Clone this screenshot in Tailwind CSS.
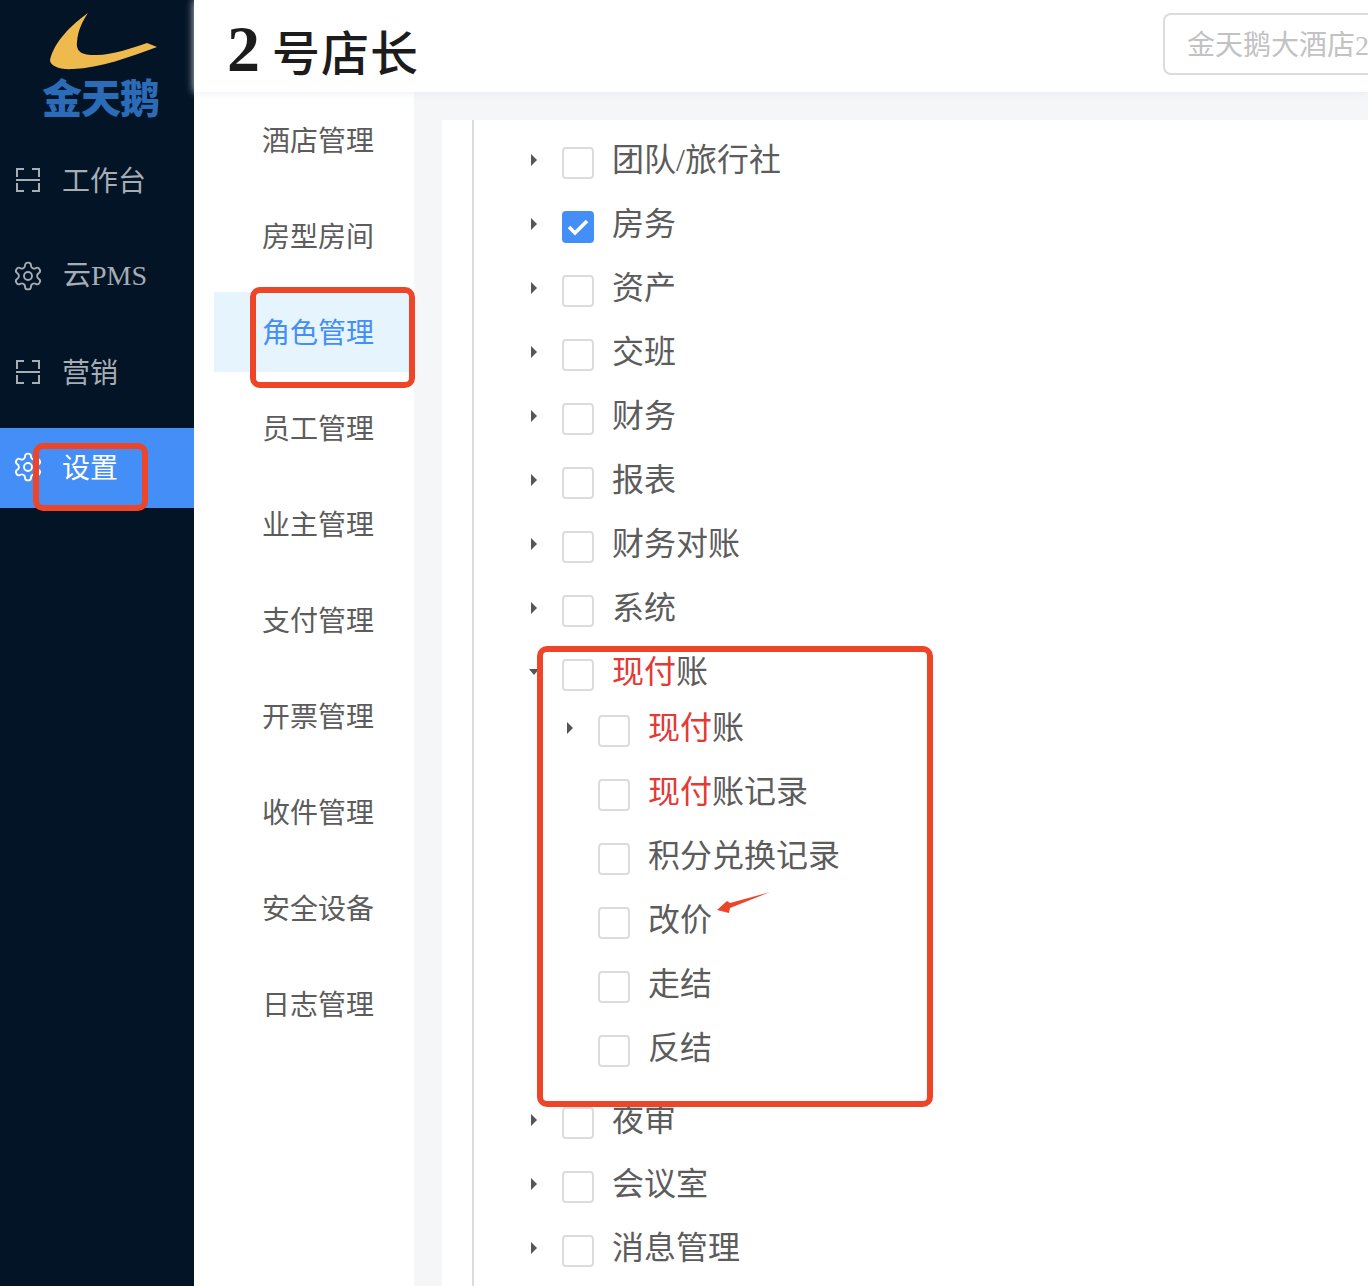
<!DOCTYPE html>
<html lang="zh-CN">
<head>
    <meta charset="UTF-8">
    <title>角色管理</title>
    <script src="https://cdn.jsdelivr.net/npm/@tailwindcss/browser@4"></script>
</head>
<body class="bg-white">
<div class="relative flex w-[1368px] h-[1286px] overflow-hidden font-['Liberation_Serif','Noto_Sans_CJK_SC',serif]">

    <!-- Sidebar -->
    <aside class="w-[194px] shrink-0 bg-[#031427] text-[#a6adb4] text-[28px]">
        <div class="h-[132px] flex flex-col items-start pt-[10px] pl-[48px]">
            <svg class="w-[112px] h-[62px]" viewBox="48 10 112 62">
                <path d="M88 13 C72 24 54 42 50 60 C50 66 60 70 73 69 C100 68 130 57 157 47 L147 43 C132 48 112 55 97 55 C80 56 76 50 77 42 C78 30 82 22 88 13 Z" fill="#eeba4e"/>
            </svg>
            <div class="-ml-[6px] mt-[3px] text-[40px] leading-[42px] font-black text-[#2b6cb8] font-['Noto_Sans_CJK_SC',sans-serif] tracking-[-1px] whitespace-nowrap">金天鹅</div>
        </div>
        <nav>
            <a class="flex items-center h-[80px] mt-[8px] pl-[15px] gap-[21px]">
                <svg class="w-[26px] h-[24px]" viewBox="0 0 26 24" fill="none" stroke="currentColor" stroke-width="2"><path d="M9 1H2v8M17 1h7v8M9 23H2v-8M17 23h7v-8M1 12h24"/></svg>
                <span class="pt-[4px]">工作台</span>
            </a>
            <a class="flex items-center h-[80px] mt-[16px] pl-[12px] gap-[19px]">
                <svg class="w-[32px] h-[32px]" viewBox="0 0 24 24" fill="none" stroke="currentColor" stroke-width="1.4" stroke-linecap="round" stroke-linejoin="round"><path d="M12.22 2h-.44a2 2 0 0 0-2 2v.18a2 2 0 0 1-1 1.73l-.43.25a2 2 0 0 1-2 0l-.15-.08a2 2 0 0 0-2.73.73l-.22.38a2 2 0 0 0 .73 2.73l.15.1a2 2 0 0 1 1 1.72v.51a2 2 0 0 1-1 1.74l-.15.09a2 2 0 0 0-.73 2.73l.22.38a2 2 0 0 0 2.73.73l.15-.08a2 2 0 0 1 2 0l.43.25a2 2 0 0 1 1 1.73V20a2 2 0 0 0 2 2h.44a2 2 0 0 0 2-2v-.18a2 2 0 0 1 1-1.73l.43-.25a2 2 0 0 1 2 0l.15.08a2 2 0 0 0 2.73-.73l.22-.39a2 2 0 0 0-.73-2.73l-.15-.08a2 2 0 0 1-1-1.74v-.5a2 2 0 0 1 1-1.74l.15-.09a2 2 0 0 0 .73-2.73l-.22-.38a2 2 0 0 0-2.73-.73l-.15.08a2 2 0 0 1-2 0l-.43-.25a2 2 0 0 1-1-1.73V4a2 2 0 0 0-2-2z"/><circle cx="12" cy="12" r="3"/></svg>
                <span>云PMS</span>
            </a>
            <a class="flex items-center h-[80px] mt-[16px] pl-[15px] gap-[21px]">
                <svg class="w-[26px] h-[24px]" viewBox="0 0 26 24" fill="none" stroke="currentColor" stroke-width="2"><path d="M9 1H2v8M17 1h7v8M9 23H2v-8M17 23h7v-8M1 12h24"/></svg>
                <span class="pt-[4px]">营销</span>
            </a>
            <a class="flex items-center h-[80px] mt-[16px] pl-[12px] gap-[18px] bg-[#448ef7] text-white">
                <svg class="w-[32px] h-[32px] -mt-[2px]" viewBox="0 0 24 24" fill="none" stroke="currentColor" stroke-width="1.4" stroke-linecap="round" stroke-linejoin="round"><path d="M12.22 2h-.44a2 2 0 0 0-2 2v.18a2 2 0 0 1-1 1.73l-.43.25a2 2 0 0 1-2 0l-.15-.08a2 2 0 0 0-2.73.73l-.22.38a2 2 0 0 0 .73 2.73l.15.1a2 2 0 0 1 1 1.72v.51a2 2 0 0 1-1 1.74l-.15.09a2 2 0 0 0-.73 2.73l.22.38a2 2 0 0 0 2.73.73l.15-.08a2 2 0 0 1 2 0l.43.25a2 2 0 0 1 1 1.73V20a2 2 0 0 0 2 2h.44a2 2 0 0 0 2-2v-.18a2 2 0 0 1 1-1.73l.43-.25a2 2 0 0 1 2 0l.15.08a2 2 0 0 0 2.73-.73l.22-.39a2 2 0 0 0-.73-2.73l-.15-.08a2 2 0 0 1-1-1.74v-.5a2 2 0 0 1 1-1.74l.15-.09a2 2 0 0 0 .73-2.73l-.22-.38a2 2 0 0 0-2.73-.73l-.15.08a2 2 0 0 1-2 0l-.43-.25a2 2 0 0 1-1-1.73V4a2 2 0 0 0-2-2z"/><circle cx="12" cy="12" r="3"/></svg>
                <span class="pt-[1px]">设置</span>
            </a>
        </nav>
    </aside>

    <div class="flex-1 flex flex-col min-w-0">
        <!-- Top bar -->
        <header class="h-[92px] shrink-0 flex items-center justify-between pl-[33px] shadow-[0_0_8px_rgba(226,232,238,0.9)] z-10 bg-white">
            <h1 class="flex items-baseline text-[48px] leading-none font-medium text-[#1c1c1c] tracking-[1px] whitespace-nowrap mt-[6px]"><span class="text-[66px] font-bold mr-[11px]">2</span>号店长</h1>
            <div class="w-[205px] h-[62px] -mt-[4px] flex items-center pl-[22px] pt-[3px] border-2 border-r-0 border-[#dcdcdc] rounded-l-[8px] text-[28px] text-[#c2c2c2] whitespace-nowrap overflow-hidden">金天鹅大酒店2</div>
        </header>

        <div class="flex-1 flex min-h-0 bg-[#f5f6f8]">
            <!-- Sub menu -->
            <nav id="subMenu" class="w-[220px] shrink-0 bg-white pt-[8px] pl-[20px] text-[28px] text-[#5c5c5c]"></nav>

            <!-- Permission tree -->
            <main class="flex-1 mt-[28px] ml-[28px] bg-white pl-[30px]">
                <div id="tree" class="h-full border-l-2 border-[#dcdcdc] pt-[8px] pl-[57px] text-[32px] text-[#5c5c5c]"></div>
            </main>
        </div>
    </div>

    <!-- Red annotations drawn on top of the screenshot -->
    <div class="absolute left-[33px] top-[443px] w-[115px] h-[68px] border-[6px] border-[#ee4427] rounded-[10px]"></div>
    <div class="absolute left-[250px] top-[287px] w-[165px] h-[101px] border-[6px] border-[#ee4427] rounded-[10px]"></div>
    <div class="absolute left-[537px] top-[646px] w-[396px] h-[461px] border-[6px] border-[#ee4427] rounded-[10px]"></div>
    <svg class="absolute left-[716px] top-[890px] w-[56px] h-[24px]" viewBox="0 0 56 24"><path d="M54 2 L14 13 L11 11 L1 20 L13 23 L14 18 Z" fill="#ee4427"/></svg>
</div>

<script type="text/javascript">
    const subItems = ["酒店管理", "房型房间", "角色管理", "员工管理", "业主管理", "支付管理", "开票管理", "收件管理", "安全设备", "日志管理"]

    document.getElementById("subMenu").innerHTML = subItems.map((name) => {
        const active = name === "角色管理" ? "bg-[#e6f4fe] text-[#448ef7]" : ""
        return `<a class="flex items-center h-[80px] mb-[16px] pl-[48px] pt-[4px] ${active}">${name}</a>`
    }).join("")

    const red = (text) => `<span class="text-[#e53935]">${text}</span>`

    const caretRight = `<i class="block w-0 h-0 border-y-[6px] border-l-[6px] border-y-transparent border-l-[#555]"></i>`
    const caretDown = `<i class="block w-0 h-0 -ml-[2px] border-x-[5px] border-t-[6px] border-x-transparent border-t-[#555]"></i>`
    const unchecked = `<span class="block w-[32px] h-[32px] mt-[6px] border-2 border-[#dcdcdc] rounded-[4px] bg-white"></span>`
    const checked = `<span class="flex items-center justify-center w-[32px] h-[32px] mt-[6px] rounded-[4px] bg-[#448ef7]"><svg class="w-[22px] h-[18px]" viewBox="0 0 22 18" fill="none" stroke="white" stroke-width="3.6"><path d="M2 9l6 6L20 3"/></svg></span>`

    const row = (label, { caret = caretRight, box = unchecked, cls = "" } = {}) => `
        <div class="flex items-center h-[64px] ${cls}">
            <span class="w-[6px] shrink-0">${caret}</span>
            <span class="ml-[25px] shrink-0">${box}</span>
            <span class="ml-[18px] whitespace-nowrap">${label}</span>
        </div>`

    document.getElementById("tree").innerHTML = [
        row("团队/旅行社"),
        row("房务", { box: checked }),
        row("资产"),
        row("交班"),
        row("财务"),
        row("报表"),
        row("财务对账"),
        row("系统"),
        row(red("现付") + "账", { caret: caretDown }),
        `<div class="-mt-[8px] mb-[8px] ml-[36px]">`,
        row(red("现付") + "账"),
        row(red("现付") + "账记录", { caret: "" }),
        row("积分兑换记录", { caret: "" }),
        row("改价", { caret: "" }),
        row("走结", { caret: "" }),
        row("反结", { caret: "" }),
        `</div>`,
        row("夜审"),
        row("会议室"),
        row("消息管理"),
    ].join("")
</script>
</body>
</html>
